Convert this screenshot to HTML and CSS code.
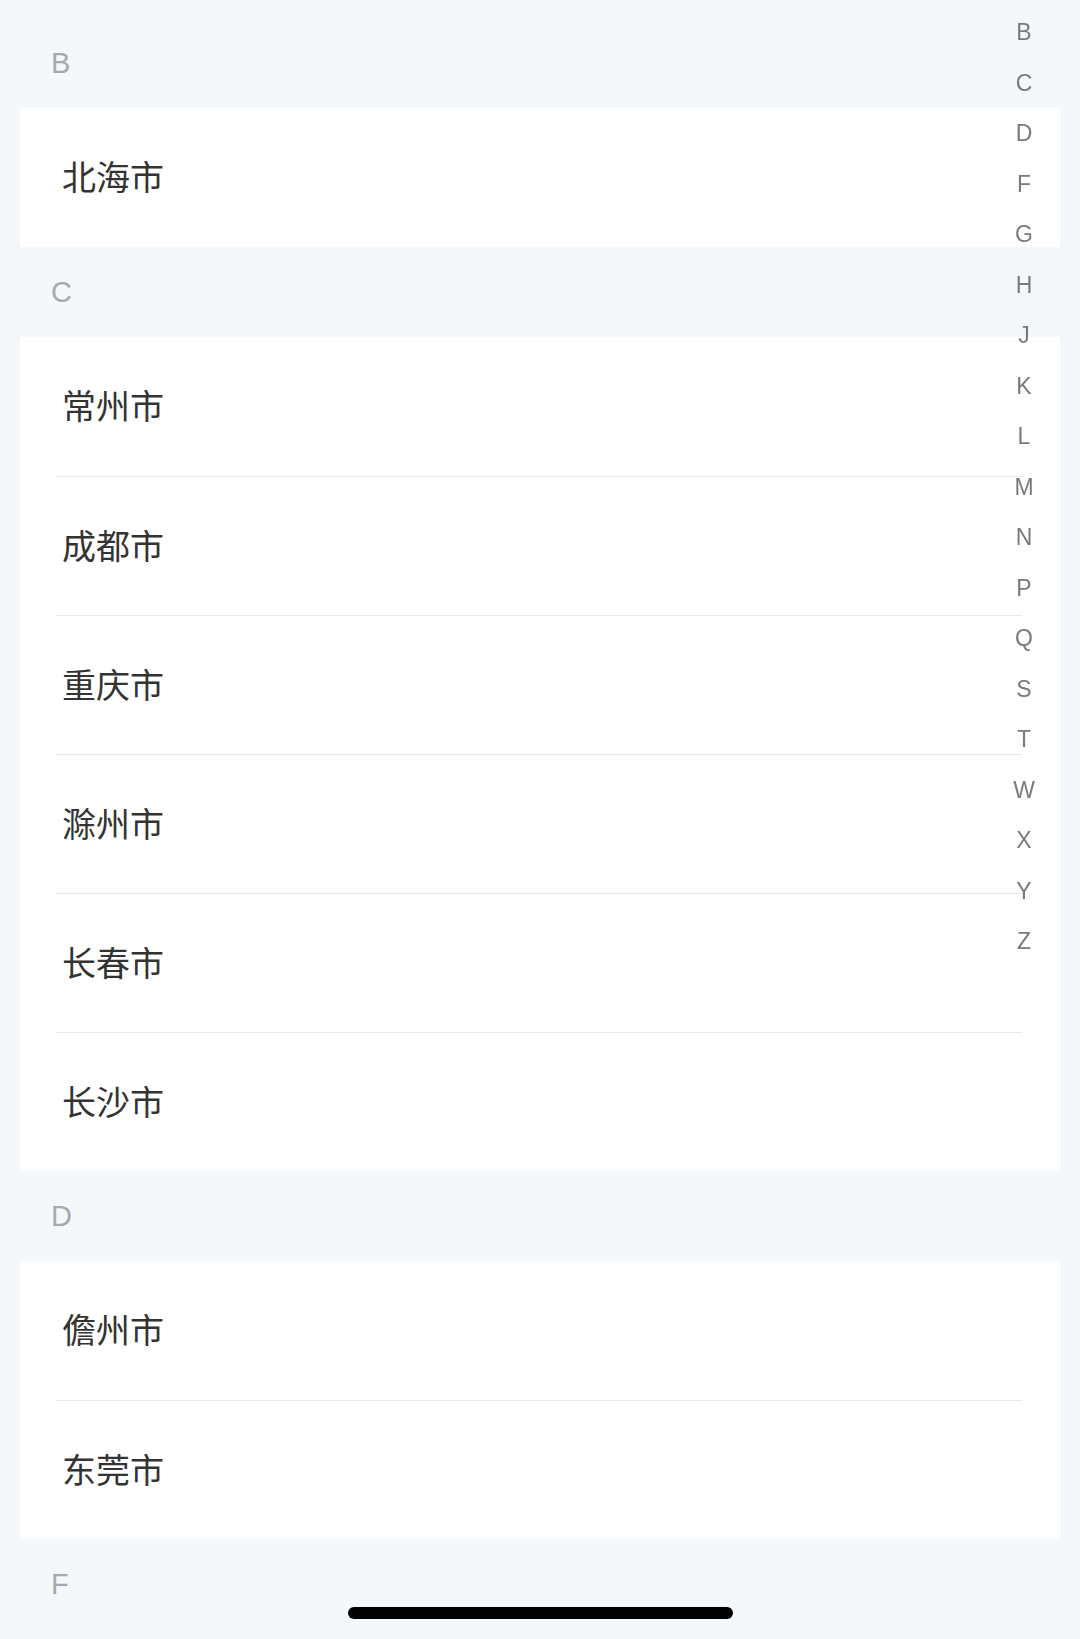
FILE: index.html
```html
<!DOCTYPE html>
<html lang="zh-CN">
<head>
<meta charset="utf-8">
<title>城市列表</title>
<link rel="stylesheet" href="styles.css">
</head>
<body>
<div class="page">
  <div class="group">
    <div class="group-title">B</div>
    <div class="card">
      <div class="row">北海市</div>
    </div>
  </div>
  <div class="group">
    <div class="group-title">C</div>
    <div class="card">
      <div class="row">常州市</div>
      <div class="row">成都市</div>
      <div class="row">重庆市</div>
      <div class="row">滁州市</div>
      <div class="row">长春市</div>
      <div class="row">长沙市</div>
    </div>
  </div>
  <div class="group">
    <div class="group-title">D</div>
    <div class="card">
      <div class="row">儋州市</div>
      <div class="row">东莞市</div>
    </div>
  </div>
  <div class="group">
    <div class="group-title">F</div>
  </div>
</div>
<ul class="index-bar">
  <li>B</li><li>C</li><li>D</li><li>F</li><li>G</li><li>H</li><li>J</li><li>K</li><li>L</li><li>M</li><li>N</li><li>P</li><li>Q</li><li>S</li><li>T</li><li>W</li><li>X</li><li>Y</li><li>Z</li>
</ul>
<div class="home-indicator"></div>
</body>
</html>
```
FILE: styles.css
```css
html, body {
  margin: 0;
  padding: 0;
  background: #f4f8fb;
  height: 1639px;
  overflow: hidden;
}
body {
  font-family: "Liberation Sans", "Noto Sans CJK SC", sans-serif;
}
.page {
  padding-top: 18px;
}
.group-title {
  height: 90px;
  display: flex;
  align-items: center;
  padding-left: 51px;
  font-size: 29px;
  color: #a6aab0;
}
.card {
  margin: 0 20px;
  background: #ffffff;
}
.row {
  box-sizing: border-box;
  height: 139px;
  margin: 0 38px 0 36px;
  padding: 0 0 4px 6px;
  display: flex;
  align-items: center;
  font-family: "Noto Sans CJK SC", sans-serif;
  font-weight: 400;
  font-size: 34px;
  color: #333333;
  border-top: 1px solid #e6e7e9;
}
.row:first-child {
  border-top: none;
}
.index-bar {
  position: fixed;
  top: 7px;
  right: 36px;
  width: 40px;
  margin: 0;
  padding: 0;
  list-style: none;
}
.index-bar li {
  height: 50.5px;
  line-height: 50.5px;
  text-align: center;
  font-size: 23px;
  color: #7a7a7a;
}
.home-indicator {
  position: fixed;
  left: 348px;
  bottom: 20px;
  width: 385px;
  height: 12px;
  border-radius: 6px;
  background: #000000;
}
```
